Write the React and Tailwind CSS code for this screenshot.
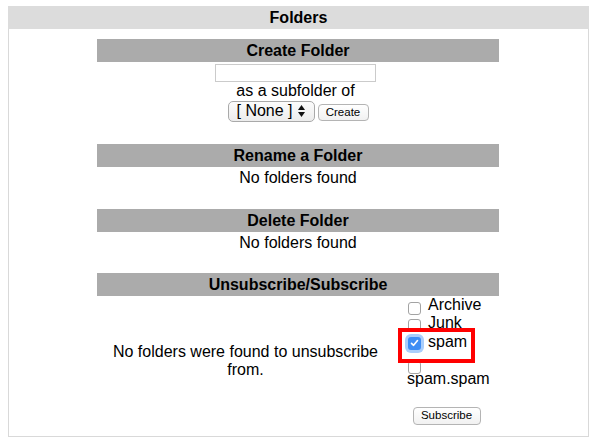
import React from "react";

const Bar = ({ children }) => (
  <div className="h-[23px] bg-[#ababab] text-center font-bold leading-[23px]">{children}</div>
);

const Box = ({ checked, className = "" }) =>
  checked ? (
    <span className={"relative flex h-[13px] w-[13px] shrink-0 items-center justify-center rounded-[3px] bg-[#3f8ef4] shadow-[0_0_0_3px_#aacefb] " + className}>
      <svg width="9" height="8" viewBox="0 0 9 8">
        <path d="M1.5 4.3 L3.6 6.3 L7.5 1.5" fill="none" stroke="#fff" strokeWidth="1.6" strokeLinecap="round" strokeLinejoin="round" />
      </svg>
    </span>
  ) : (
    <span className={"block h-[13px] w-[13px] shrink-0 rounded-[3px] border border-[#a3a3a3] bg-white " + className} />
  );

const Button = ({ children, className = "" }) => (
  <span className={"flex items-center justify-center rounded-[4px] border border-[#b4b4b4] bg-gradient-to-b from-white to-[#f1f1f1] text-[11.5px] leading-none " + className}>
    {children}
  </span>
);

export default function App() {
  return (
    <div className="h-[448px] w-[596px] bg-white pt-[6px] font-['Liberation_Sans',Arial,sans-serif] text-[16px] text-black">
      <div className="ml-[8px] w-[581px] border-x border-b border-[#d9d9d9] pb-[11px]">
        <div className="-mx-px h-[23px] bg-[#dcdcdc] text-center font-bold leading-[23px]">Folders</div>

        <div className="ml-[88px] mt-[10px] w-[402px]">
          {/* create */}
          <Bar>Create Folder</Bar>
          <div className="mt-[2px] flex justify-center">
            <div className="mr-[5px] h-[18px] w-[161px] border border-[#cbcbcb] bg-white" />
          </div>
          <div className="mr-[5px] text-center leading-[18.5px]">as a subfolder of</div>
          <div className="flex items-center justify-center">
            <div className="flex h-[21px] w-[87px] items-center rounded-[5px] border border-[#a9a9a9] bg-gradient-to-b from-[#fcfcfc] to-[#ececec] pl-[8px] leading-none">
              <span>[ None ]</span>
              <span className="ml-[5px] flex flex-col gap-[2px]">
                <svg width="7" height="5" viewBox="0 0 7 5"><path d="M3.5 0 L7 5 L0 5 Z" fill="#111" /></svg>
                <svg width="7" height="5" viewBox="0 0 7 5"><path d="M0 0 L7 0 L3.5 5 Z" fill="#111" /></svg>
              </span>
            </div>
            <Button className="ml-[3px] mt-[3px] h-[17px] w-[51px]">Create</Button>
          </div>

          {/* rename */}
          <div className="mt-[22px]">
            <Bar>Rename a Folder</Bar>
            <div className="mt-[2px] text-center leading-[18.5px]">No folders found</div>
          </div>

          {/* delete */}
          <div className="mt-[21.5px]">
            <Bar>Delete Folder</Bar>
            <div className="mt-[2px] text-center leading-[18.5px]">No folders found</div>
          </div>

          {/* subscribe */}
          <div className="mt-[20.5px]">
            <Bar>Unsubscribe/Subscribe</Bar>
            <div className="flex">
              <div className="flex w-[297px] items-center justify-center pt-[2px] text-center leading-[18.5px]">
                <span className="w-[290px]">No folders were found to unsubscribe from.</span>
              </div>
              <div className="relative w-[105px] leading-[18.5px]">
                <div className="flex h-[18.5px] items-start pl-[14px]">
                  <Box className="mt-[6px]" />
                  <span className="ml-[7px]">Archive</span>
                </div>
                <div className="flex h-[18.5px] items-start pl-[14px]">
                  <Box className="mt-[4.5px]" />
                  <span className="ml-[7px]">Junk</span>
                </div>
                <div className="flex h-[18.5px] items-start pl-[14px]">
                  <Box checked className="mt-[4px]" />
                  <span className="ml-[7px]">spam</span>
                </div>
                <div className="flex h-[18.5px] items-start pl-[14px]">
                  <Box className="mt-[10px]" />
                </div>
                <div className="pl-[13px]">spam.spam</div>
                <div className="mt-[19px] flex justify-center">
                  <Button className="h-[18px] w-[68px]">Subscribe</Button>
                </div>
                <div className="pointer-events-none absolute left-[4px] top-[32px] h-[35px] w-[77px] border-4 border-[#ff0000]" />
              </div>
            </div>
          </div>
        </div>
      </div>
    </div>
  );
}
